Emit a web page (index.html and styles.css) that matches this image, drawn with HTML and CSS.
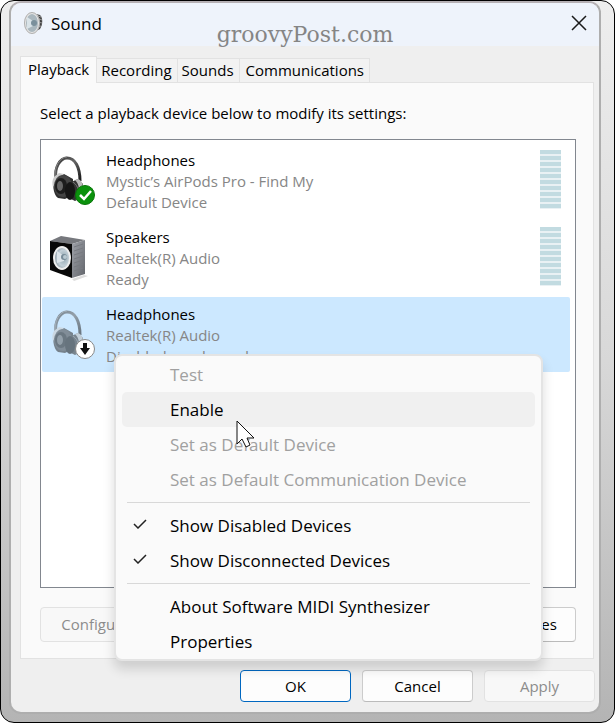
FILE: index.html
```html
<!DOCTYPE html>
<html lang="en">
<head>
<meta charset="utf-8">
<meta name="viewport" content="width=device-width, initial-scale=1">
<title>Sound</title>
<link rel="stylesheet" href="styles.css">
</head>
<body>
<svg class="defs" width="0" height="0" aria-hidden="true">
  <defs>
    <linearGradient id="band" x1="0" y1="0" x2="1" y2="1"><stop offset="0" stop-color="#353535"/><stop offset=".45" stop-color="#666"/><stop offset="1" stop-color="#171717"/></linearGradient>
    <linearGradient id="side" x1="0" y1="0" x2="1" y2="1"><stop offset="0" stop-color="#a0a3aa"/><stop offset="1" stop-color="#62656b"/></linearGradient>
    <radialGradient id="cone" cx=".6" cy=".5" r=".6"><stop offset="0" stop-color="#8fa3ad"/><stop offset=".6" stop-color="#c3d0d8"/><stop offset="1" stop-color="#8896a0"/></radialGradient>
    <symbol id="headphones" viewBox="0 0 46 52">
      <path d="M4 24C2 13 8 3 15 3c8 0 13 9 13 23" fill="none" stroke="url(#band)" stroke-width="3"/>
      <path d="M3 23C2 12 8 2 15 2" fill="none" stroke="#858585" stroke-width="1"/>
      <path d="M3 22C0 28 1 40 6 43l7 1 8-4V24l-9-5z" fill="#303030"/>
      <path d="M2 22C0 25 0 29 1 32l5-9 6-4-5-1z" fill="#ccc"/>
      <ellipse cx="11" cy="31" rx="9" ry="11" fill="#444"/>
      <ellipse cx="9" cy="31" rx="6" ry="8" fill="#1d1d1d"/>
      <ellipse cx="8" cy="31" rx="3" ry="5" fill="#666"/>
      <path d="M17 28l9-4 5 5v13l-8 4-6-3z" fill="#333"/>
      <path d="M26 24c6 2 6 10 3 17l-5 3c4-7 4-14-1-19z" fill="#bbb"/>
      <ellipse cx="18" cy="36" rx="5" ry="9" fill="#161616"/>
      <path d="M21 27c6 4 7 12 3 18" fill="none" stroke="#777"/>
    </symbol>
  </defs>
</svg>
<main class="window">
  <header class="titlebar">
    <svg class="app-icon" viewBox="0 0 20 22" aria-hidden="true">
      <path d="M8 1l8 2c3 3 3 9 0 14l-7 4z" fill="#444"/>
      <path d="M12 3l5 2M13 6l5 2M14 10l4 1M13 15l4-1" stroke="#999"/>
      <ellipse cx="8" cy="11" rx="7" ry="10" fill="#aab7be" stroke="#e6e6e6" stroke-width="2"/>
      <ellipse cx="8" cy="11" rx="7.500" ry="10.500" fill="none" stroke="#888" stroke-width=".6"/>
      <path d="M3 5l6 4v5l-6 3z" fill="#d9e3e8"/><circle cx="10" cy="11" r="3" fill="#7b909c"/>
    </svg>
    <h1>Sound</h1>
    <button class="close" aria-label="Close"><svg viewBox="0 0 16 16"><path d="M1 1l14 14M15 1L1 15" stroke="#1a1a1a" stroke-width="1.500"/></svg></button>
  </header>
  <div class="watermark">groovyPost.com</div>
  <div class="body">
    <div class="tabs" role="tablist">
      <button class="tab active" role="tab" aria-selected="true">Playback</button>
      <button class="tab" role="tab">Recording</button>
      <button class="tab" role="tab">Sounds</button>
      <button class="tab" role="tab">Communications</button>
    </div>
    <section class="panel">
      <p id="hint">Select a playback device below to modify its settings:</p>
      <ul class="devices" role="listbox" aria-labelledby="hint">
        <li class="device" role="option">
          <svg class="device-icon" viewBox="0 0 50 56" aria-hidden="true"><use href="#headphones" x="4" y="3" width="46" height="52"/><circle cx="37" cy="43" r="9.500" fill="#0b920d" stroke="#087609"/><path d="M32 43l4 4 7-8" fill="none" stroke="#fff" stroke-width="2.500"/></svg>
          <div class="info"><strong>Headphones</strong><span>Mystic’s AirPods Pro - Find My</span><span>Default Device</span></div>
          <div class="meter"></div>
        </li>
        <li class="device" role="option">
          <svg class="device-icon" viewBox="0 0 50 56" aria-hidden="true">
            <path d="M24 50l12-4 4 1-14 5z" fill="#ddd"/>
            <path d="M2 12l11-5 24 4-13 4z" fill="#76787d"/>
            <path d="M24 15l13-4v34l-13 4z" fill="url(#side)"/>
            <path d="M26 18l9-3M26 22l9-3M26 26l9-3M26 30l9-3M26 34l9-3M26 38l9-3M26 42l9-3" stroke="#777a80"/>
            <path d="M2 12l22 3v34L2 41z" fill="#080808"/>
            <ellipse cx="14" cy="29" rx="8" ry="11" fill="url(#cone)" stroke="#eee" stroke-width="2"/>
            <path d="M9 22l7 5v5l-7 2z" fill="#dce4e9"/><circle cx="16" cy="28" r="3" fill="#778b98"/><circle cx="17" cy="28" r="2" fill="#b9c9d1"/>
          </svg>
          <div class="info"><strong>Speakers</strong><span>Realtek(R) Audio</span><span>Ready</span></div>
          <div class="meter"></div>
        </li>
        <li class="device selected" role="option" aria-selected="true">
          <svg class="device-icon" viewBox="0 0 50 56" aria-hidden="true"><use href="#headphones" x="4" y="3" width="46" height="52" opacity=".55"/><circle cx="37" cy="43" r="9.500" fill="#fff" stroke="#888"/><path d="M35 37h4v5h3l-5 7-5-7h3z" fill="#111"/></svg>
          <div class="info"><strong>Headphones</strong><span>Realtek(R) Audio</span><span>Disabled, unplugged</span></div>
        </li>
      </ul>
      <div class="panel-actions">
        <button class="btn" disabled>Configure</button>
        <button class="btn">Properties</button>
      </div>
    </section>
    <footer class="actions">
      <button class="btn primary">OK</button>
      <button class="btn">Cancel</button>
      <button class="btn" disabled>Apply</button>
    </footer>
  </div>
  <div class="menu" role="menu">
    <button role="menuitem" disabled>Test</button>
    <button role="menuitem" class="hover">Enable</button>
    <button role="menuitem" disabled>Set as Default Device</button>
    <button role="menuitem" disabled>Set as Default Communication Device</button>
    <hr>
    <button role="menuitemcheckbox" aria-checked="true"><svg viewBox="0 0 14 10"><path d="M1 5l4 4 8-8"/></svg>Show Disabled Devices</button>
    <button role="menuitemcheckbox" aria-checked="true"><svg viewBox="0 0 14 10"><path d="M1 5l4 4 8-8"/></svg>Show Disconnected Devices</button>
    <hr>
    <button role="menuitem">About Software MIDI Synthesizer</button>
    <button role="menuitem">Properties</button>
    <svg class="cursor" viewBox="0 0 20 28" aria-hidden="true"><path d="M1 1v23l5-5 4 8 4-2-3-7h7z" fill="#fff" stroke="#111"/></svg>
  </div>
</main>
</body>
</html>
```
FILE: styles.css
```css
* { box-sizing: border-box; }
html { background: #fff; }
body {
  margin: 0;
  padding: 0 13px 8px 8px;
  border: 1px solid #000;
  border-radius: 14px;
  background: linear-gradient(#eee, #d8d8d8 50%, #b4b4b4);
  font-family: "Open Sans", "Noto Sans", sans-serif;
  font-size: 15px;
  line-height: 21px;
  color: #000;
}
button { font: inherit; color: inherit; margin: 0; }
.defs { position: absolute; }
.window {
  position: relative;
  border: 2px solid #aeaeae;
  border-top-color: #b5b0b4;
  border-radius: 12px;
  background: #efefef;
}
.titlebar {
  display: flex;
  align-items: center;
  height: 43px;
  padding: 0 12px 3px 13px;
  background: #eef3fb;
  border-radius: 10px 10px 0 0;
}
.app-icon { width: 20px; height: 22px; }
.titlebar h1 { flex: 1; margin: 0 0 0 7px; font-size: 17px; font-weight: 400; }
.close { display: flex; padding: 0; border: 0; background: none; }
.close svg { width: 16px; height: 16px; }
.watermark {
  position: absolute;
  top: 18px;
  left: 0;
  right: 0;
  text-align: center;
  font: 22px/28px "DejaVu Serif", serif;
  color: #858585;
}
.body { padding: 10px 4px 10px 9px; }
.tabs { display: flex; align-items: flex-end; }
.tab {
  height: 24px;
  padding: 0 5px 0 4px;
  border: 1px solid #e2e2e2;
  border-left: 0;
  border-bottom: 0;
  background: #f2f2f2;
}
.tab.active {
  height: 27px;
  padding: 0 7px 2px;
  border-left: 1px solid #e2e2e2;
  background: #fafafa;
  margin-bottom: -1px;
  z-index: 1;
}
.tab:last-child { padding-left: 6px; }
.panel {
  margin-right: 1px;
  padding: 20px 17px 16px 19px;
  border: 1px solid #e2e2e2;
  background: #fafafa;
}
.panel p { margin: 0 0 15px; }
.devices {
  min-height: 449px;
  margin: 0;
  padding: 3px 5px 0 1px;
  display: flex;
  flex-direction: column;
  gap: 2px;
  border: 1px solid #82878f;
  background: #fff;
  list-style: none;
}
.device { display: flex; padding: 7px 9px 5px 6px; border-radius: 2px; }
.device.selected { background: #cce8ff; }
.device-icon { width: 50px; height: 56px; margin-top: 2px; }
.info { flex: 1; display: flex; flex-direction: column; margin-left: 8px; color: #868686; }
.info strong { font-weight: 400; color: #000; }
.meter {
  width: 21px;
  height: 59px;
  background: repeating-linear-gradient(#c2dbe1 0 4px, #e9f1f4 4px 6px);
}
.panel-actions { display: flex; justify-content: space-between; margin-top: 19px; }
.btn {
  width: 111px;
  height: 32px;
  padding: 0;
  border: 1px solid #ccc;
  border-bottom-color: #bbb;
  border-radius: 4px;
  background: #fdfdfd;
}
.btn:disabled { border-color: #e2e2e2; background: #f8f8f8; color: #8c8c8c; }
.btn.primary { border-color: #0067c0; }
.panel-actions .btn { height: 35px; }
.actions { display: flex; justify-content: flex-end; gap: 11px; margin-top: 11px; }
.menu {
  position: absolute;
  top: 351px;
  left: 103px;
  width: 429px;
  padding: 1px 6px 0;
  border: 2px solid #e4e4e4;
  border-radius: 8px;
  background: #fafafa;
  box-shadow: 0 8px 12px rgba(0, 0, 0, .14);
  font-size: 17px;
}
.menu button {
  position: relative;
  display: block;
  width: 100%;
  height: 35px;
  padding: 0 0 0 48px;
  border: 0;
  border-radius: 5px;
  background: none;
  text-align: left;
}
.menu button:disabled { color: #a0a0a0; }
.menu button.hover { background: #f0f0f0; }
.menu button svg { position: absolute; left: 11px; top: 11px; width: 14px; height: 10px; fill: none; stroke: #222; stroke-width: 1.5; }
.menu hr { height: 1px; margin: 5px; border: 0; background: #d8d8d8; }
.menu .cursor { position: absolute; left: 120px; top: 64px; width: 20px; height: 28px; }
```
